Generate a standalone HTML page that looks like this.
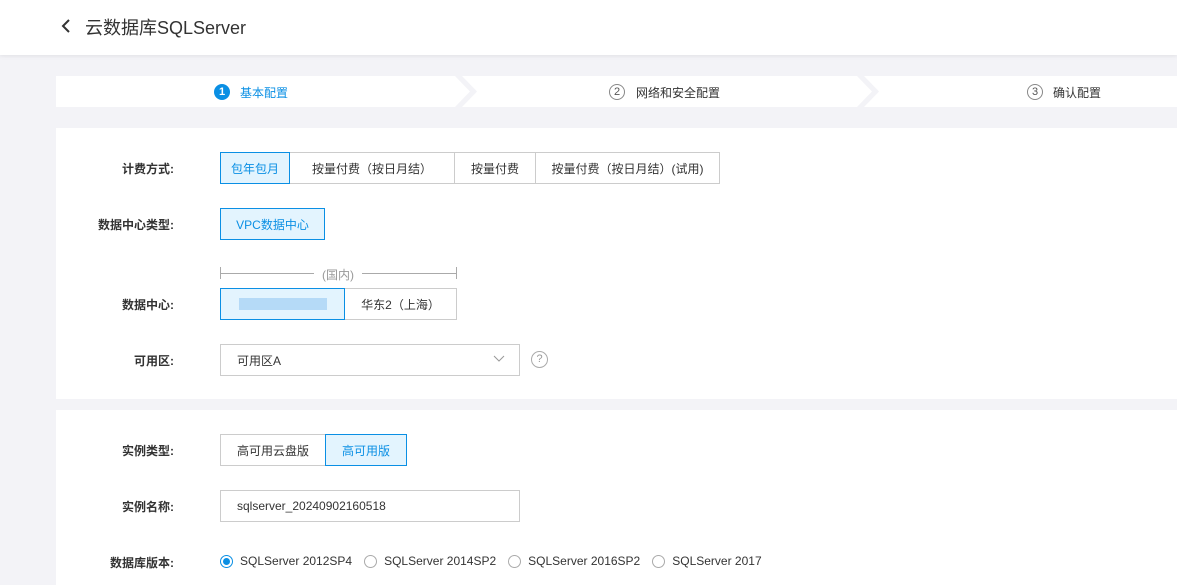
<!DOCTYPE html><html><head><meta charset="utf-8"><style>
*{box-sizing:border-box;margin:0;padding:0}
body{width:1177px;height:585px;overflow:hidden;background:#f3f3f7;font-family:"Liberation Sans","Noto Sans CJK SC",sans-serif;font-size:12px;color:#333;position:relative}
.a{position:absolute}
.hdr{left:0;top:0;width:1177px;height:55px;background:#fff;box-shadow:0 1px 4px rgba(0,0,0,.08)}
.card{background:#fff;left:56px;width:1121px}
.lbl{font-weight:bold;text-align:right;width:120px;left:54px;color:#333}
.seg{display:flex;height:32px}
.seg div{border:1px solid #ccc;margin-left:-1px;display:flex;align-items:center;justify-content:center;background:#fff;color:#333}
.seg div.on{border-color:#0a8fe4;background:#e3f4fe;color:#0a8fe4;position:relative;z-index:1}
.inp{border:1px solid #ccc;height:32px;background:#fff;padding-left:16px;display:flex;align-items:center}
.rad{display:inline-flex;align-items:center;margin-right:12px}
.rad i{width:13px;height:13px;border:1px solid #aaa;border-radius:50%;margin-right:7px;display:inline-block;position:relative}
.rad i.on{border-color:#0a8fe4}
.rad i.on:after{content:"";position:absolute;left:2px;top:2px;width:7px;height:7px;border-radius:50%;background:#0a8fe4}
</style></head><body>
<div class="a hdr"></div>
<svg class="a" style="left:60px;top:18px" width="12" height="16"><path d="M9 2 L3 8 L9 14" stroke="#333" stroke-width="2" fill="none"/></svg>
<div class="a" style="left:85px;top:14px;font-size:18px;color:#333">云数据库SQLServer</div>

<div class="a" style="left:56px;top:76px;width:1121px;height:31px;background:#fff"></div>
<svg class="a" style="left:450px;top:76px" width="40" height="31"><path d="M5 0 L20 15.5 L5 31 L12 31 L27 15.5 L12 0Z" fill="#f3f3f7"/></svg>
<svg class="a" style="left:852px;top:76px" width="40" height="31"><path d="M5 0 L20 15.5 L5 31 L12 31 L27 15.5 L12 0Z" fill="#f3f3f7"/></svg>
<div class="a" style="left:214px;top:84px;width:16px;height:16px;border-radius:50%;background:#0a8fe4;color:#fff;font-size:11px;font-weight:bold;text-align:center;line-height:16px">1</div>
<div class="a" style="left:240px;top:84px;color:#0a8fe4">基本配置</div>
<div class="a" style="left:609px;top:84px;width:16px;height:16px;border-radius:50%;border:1px solid #888;color:#555;font-size:11px;text-align:center;line-height:14px">2</div>
<div class="a" style="left:636px;top:84px;color:#333">网络和安全配置</div>
<div class="a" style="left:1027px;top:84px;width:16px;height:16px;border-radius:50%;border:1px solid #888;color:#555;font-size:11px;text-align:center;line-height:14px">3</div>
<div class="a" style="left:1053px;top:84px;color:#333">确认配置</div>

<div class="a card" style="top:128px;height:271px"></div>
<div class="a card" style="top:410px;height:175px"></div>

<div class="a lbl" style="top:160px">计费方式:</div>
<div class="a seg" style="left:220px;top:152px"><div class="on" style="width:70px;margin-left:0">包年包月</div><div style="width:166px">按量付费（按日月结）</div><div style="width:82px">按量付费</div><div style="width:185px">按量付费（按日月结）(试用)</div></div>

<div class="a lbl" style="top:216px">数据中心类型:</div>
<div class="a seg" style="left:220px;top:208px"><div class="on" style="width:105px;margin-left:0">VPC数据中心</div></div>

<div class="a" style="left:220px;top:267px;width:1px;height:12px;background:#aaa"></div>
<div class="a" style="left:456px;top:267px;width:1px;height:12px;background:#aaa"></div>
<div class="a" style="left:220px;top:273px;width:94px;height:1px;background:#aaa"></div>
<div class="a" style="left:362px;top:273px;width:94px;height:1px;background:#aaa"></div>
<div class="a" style="left:322px;top:266px;color:#999">(国内)</div>

<div class="a lbl" style="top:296px">数据中心:</div>
<div class="a seg" style="left:220px;top:288px"><div class="on" style="width:125px;margin-left:0"><span style="display:block;width:88px;height:12px;background:#a9d3f5;opacity:.8"></span></div><div style="width:113px">华东2（上海）</div></div>

<div class="a lbl" style="top:352px">可用区:</div>
<div class="a inp" style="left:220px;top:344px;width:300px">可用区A</div>
<svg class="a" style="left:493px;top:355px" width="12" height="8"><path d="M1 1 L6 6 L11 1" stroke="#999" fill="none"/></svg>
<div class="a" style="left:531px;top:351px;width:17px;height:17px;border:1px solid #aaa;border-radius:50%;color:#999;font-size:11px;text-align:center;line-height:15px">?</div>

<div class="a lbl" style="top:442px">实例类型:</div>
<div class="a seg" style="left:220px;top:434px"><div style="width:106px;margin-left:0">高可用云盘版</div><div class="on" style="width:82px">高可用版</div></div>

<div class="a lbl" style="top:498px">实例名称:</div>
<div class="a inp" style="left:220px;top:490px;width:300px">sqlserver_20240902160518</div>

<div class="a lbl" style="top:554px">数据库版本:</div>
<div class="a" style="left:220px;top:554px;display:flex"><span class="rad"><i class="on"></i>SQLServer 2012SP4</span><span class="rad"><i></i>SQLServer 2014SP2</span><span class="rad"><i></i>SQLServer 2016SP2</span><span class="rad"><i></i>SQLServer 2017</span></div>
</body></html>
